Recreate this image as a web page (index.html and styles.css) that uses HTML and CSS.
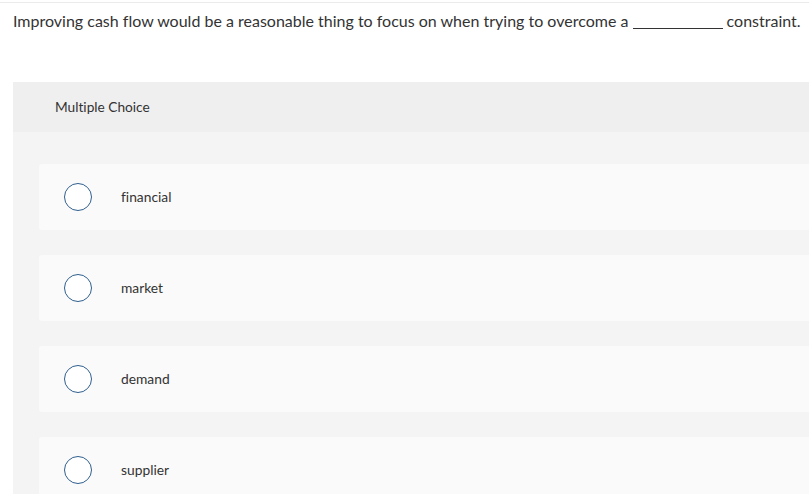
FILE: index.html
```html
<!DOCTYPE html>
<html>
<head>
<meta charset="utf-8">
<link rel="stylesheet" href="styles.css">
</head>
<body>
<div class="page">
  <div class="topline"></div>
  <p class="question">Improving cash flow would be a reasonable thing to focus on when trying to overcome a <span class="blank"></span> constraint.</p>
  <section class="panel">
    <header class="panel-head">Multiple Choice</header>
    <div class="choices">
      <label class="choice"><span class="radio"></span><span class="label">financial</span></label>
      <label class="choice"><span class="radio"></span><span class="label">market</span></label>
      <label class="choice"><span class="radio"></span><span class="label">demand</span></label>
      <label class="choice"><span class="radio"></span><span class="label">supplier</span></label>
    </div>
  </section>
</div>
</body>
</html>
```
FILE: styles.css
```css
html, body {
  margin: 0;
  padding: 0;
  background: #ffffff;
  overflow: hidden;
}
body {
  font-family: "Lato", "Open Sans", sans-serif;
  font-variant-ligatures: none;
  color: #333333;
  width: 809px;
  height: 494px;
}
.page {
  width: 840px;
}
.topline {
  height: 1px;
  background: #ebebeb;
  margin: 2px 0 0 0;
}
.question {
  margin: 0;
  padding: 7px 0 0 13px;
  font-size: 16px;
  line-height: 22px;
  white-space: nowrap;
}
.blank {
  display: inline-block;
  width: 90px;
  border-bottom: 1px solid #333;
  vertical-align: -2px;
}
.panel {
  margin: 50px 0 0 13px;
  background: #f4f4f4;
}
.panel-head {
  background: #efefef;
  height: 50px;
  line-height: 50px;
  padding-left: 42px;
  font-size: 13.7px;
}
.choices {
  display: flex;
  flex-direction: column;
  gap: 25px;
  padding: 32px 0 0 26px;
}
.choice {
  display: flex;
  align-items: center;
  height: 66px;
  background: #fafafa;
  border-radius: 3px 0 0 3px;
  padding-left: 25px;
}
.radio {
  width: 26px;
  height: 26px;
  border: 1.3px solid #2f5f8e;
  border-radius: 50%;
  background: #fff;
  flex: none;
}
.label {
  margin-left: 29px;
  padding-bottom: 2px;
  font-size: 13.8px;
}
```
